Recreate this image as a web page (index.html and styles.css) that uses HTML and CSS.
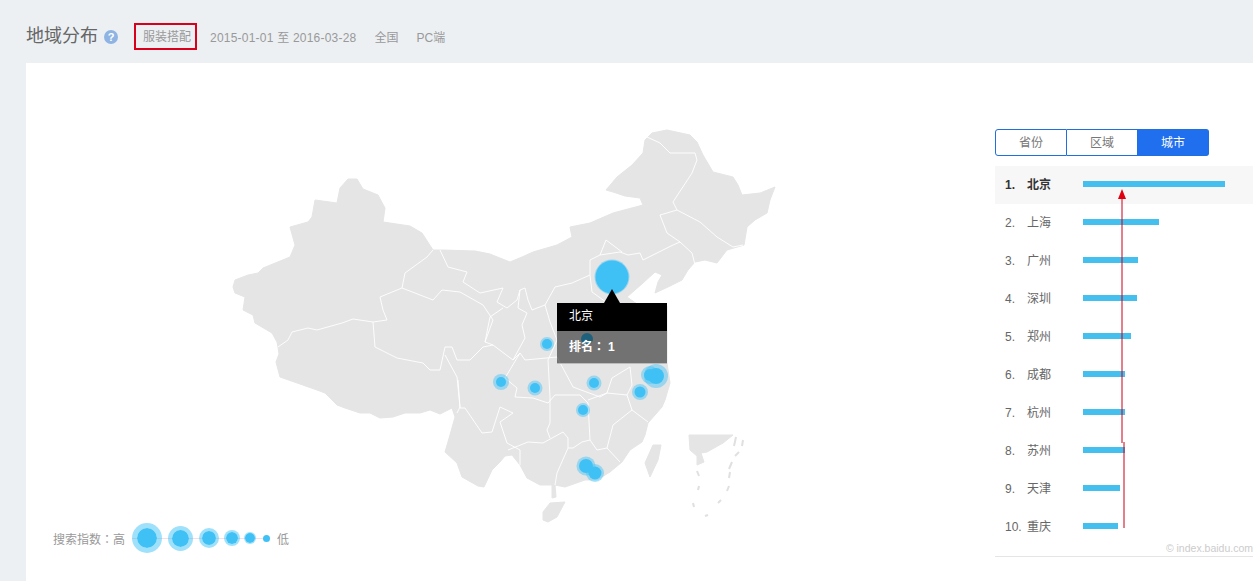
FILE: index.html
```html
<!DOCTYPE html>
<html lang="zh-CN">
<head>
  <meta charset="UTF-8">
  <title>地域分布</title>
  <link rel="stylesheet" href="styles.css">
</head>
<body>

  <div class="cabecera">
    <h1>地域分布</h1>
    <span class="ayuda">?</span>
    <span class="palabra">服装搭配</span>
    <span class="fecha">2015-01-01 至 2016-03-28</span>
    <span class="filtro">全国</span>
    <span class="filtro">PC端</span>
  </div>

  <div class="tarjeta">
    <div class="mapa">
      <svg class="china" width="969" height="400" viewBox="26 123 969 400">
        <g class="tierra">
          <path d="M233 287L235 280 248 275 258 273 263 268 290 257 295 245 290 227 308 222 312 217 315 200 337 203 340 188 348 179 357 179 363 189 378 195 385 208 383 222 410 226 422 233 433 250 442 250 475 251 490 254 510 262 522 257 533 252 557 245 572 237 570 227 590 223 613 213 643 205 640 198 625 196 613 192 606 190 617 177 632 165 643 153 645 140 652 133 667 130 690 135 697 142 703 155 713 172 733 177 738 185 742 195 760 193 775 187 770 200 767 213 755 220 747 227 744 245 727 250 717 263 705 260 695 262 688 270 682 280 668 287 655 293 658 282 662 275 655 272 643 283 627 297 640 306 667 306 667 363 670 383 665 400 662 407 648 423 645 435 642 442 630 450 622 462 610 472 597 480 585 480 565 487 555 485 556 497 552 498 552 485 540 485 527 478 520 465 512 455 505 456 500 462 492 470 484 487 478 486 462 477 457 463 445 452 450 435 455 417 452 408 440 414 430 410 420 413 405 413 393 417 380 418 370 413 360 413 345 408 337 405 325 393 317 390 300 384 280 377 276 362 279 354 278 347 277 342 272 333 255 323 253 315 243 310 245 297 235 293Z"/>
          <path d="M543 512L550 503 565 502 557 517 548 522 543 520Z"/>
          <path d="M653 445L661 445 658 460 650 477 645 463Z"/>
          <path d="M689 435L733 435 723 443 707 452 701 453 704 462 697 465 697 456 690 450Z"/>
        </g>
        <g class="fronteras">
          <path d="M278 347L288 340 292 332 308 328 317 330 342 323 353 319 373 322 387 320 383 310 380 297 402 288 405 273 427 257 433 250"/>
          <path d="M402 288L433 300 442 290 460 292 483 305 493 320 485 342 493 345 513 360 520 353"/>
          <path d="M440 250L448 267 467 272 463 282 480 293 503 288 497 302 507 308 517 300 520 290 525 288 528 300 532 310 545 305 555 287 572 283 590 275 590 260 600 255 620 252 628 255 640 253 643 260 673 245 680 242 692 253 695 265"/>
          <path d="M373 322L375 347 397 358 423 363 430 370 440 370 445 347 452 347 457 360 470 360 483 347 493 345"/>
          <path d="M445 355L457 377 460 407 457 413"/>
          <path d="M647 137L660 143 670 153 695 153 697 160 692 173 673 202 677 210 660 215 667 233 680 242"/>
          <path d="M677 210L700 222 717 237 733 247 743 245"/>
          <path d="M458 380L460 408 465 408 482 433 492 432 500 407 513 413 500 422 507 443 520 450 520 465"/>
          <path d="M508 450L528 442 543 443 563 432 568 438 568 448 557 473 555 485"/>
          <path d="M550 397L550 423 547 430 550 438"/>
          <path d="M517 388L515 397 533 398 548 403 555 395 580 395 588 403 590 440 582 442 573 448 568 448"/>
          <path d="M588 400L607 393 627 395 632 410 648 422"/>
          <path d="M632 410L613 425 607 448 620 462"/>
          <path d="M590 440L597 450 607 448"/>
          <path d="M607 393L612 378 630 367 632 385 627 395"/>
          <path d="M520 353L525 360 557 357 573 387 600 397 607 393"/>
          <path d="M485 342L490 317 503 308"/>
          <path d="M520 290L518 308 527 313 522 325 525 338 513 360"/>
          <path d="M517 388L505 378 520 353"/>
          <path d="M545 305L550 322 557 340 548 360 550 397"/>
          <path d="M590 275L592 292 606 302"/>
          <path d="M600 255L606 240 622 252"/>
        </g>
        <g class="islas">
          <path d="M736 437L734 446"/>
          <path d="M743 440L742 446"/>
          <path d="M739 452L735 456"/>
          <path d="M732 462L729 469"/>
          <path d="M730 472L729 478"/>
          <path d="M729 486L727 491"/>
          <path d="M721 500L718 503"/>
          <path d="M708 515L705 516"/>
          <path d="M693 503L694 507"/>
          <path d="M699 486L698 490"/>
          <path d="M697 471L699 476"/>
        </g>
        <g class="burbujas">
          <circle class="halo" cx="656" cy="376" r="12"/>
          <circle class="halo" cx="650" cy="375" r="9"/>
          <circle class="halo" cx="640" cy="392" r="8"/>
          <circle class="halo" cx="594" cy="383" r="7.5"/>
          <circle class="halo" cx="535" cy="388" r="7.5"/>
          <circle class="halo" cx="501" cy="382" r="8"/>
          <circle class="halo" cx="547" cy="344" r="7"/>
          <circle class="halo" cx="583" cy="410" r="7"/>
          <circle class="halo" cx="586" cy="466" r="9.5"/>
          <circle class="halo" cx="595" cy="473" r="9"/>
          <circle class="halo" cx="612" cy="277" r="17.5"/>
          <circle cx="656" cy="376" r="8"/>
          <circle cx="650" cy="375" r="6"/>
          <circle cx="640" cy="392" r="5.5"/>
          <circle cx="594" cy="383" r="5"/>
          <circle cx="535" cy="388" r="5"/>
          <circle cx="501" cy="382" r="5"/>
          <circle cx="547" cy="344" r="5"/>
          <circle cx="583" cy="410" r="5"/>
          <circle cx="587" cy="339" r="6"/>
          <circle cx="586" cy="466" r="7"/>
          <circle cx="595" cy="473" r="6.5"/>
          <circle cx="612" cy="277" r="16.5"/>
        </g>
      </svg>

      <div class="globo">
        <div class="globo-nombre">北京</div>
        <div class="globo-rango">排名<span class="dos-puntos" lang="zh-TW">：</span>1</div>
      </div>

      <div class="leyenda">
        <span class="leyenda-texto">搜索指数<span class="dos-puntos" lang="zh-TW">：</span>高</span>
        <div class="escala">
          <span class="punto p1"></span>
          <span class="punto p2"></span>
          <span class="punto p3"></span>
          <span class="punto p4"></span>
          <span class="punto p5"></span>
          <span class="punto p6"></span>
        </div>
        <span class="leyenda-texto">低</span>
      </div>
    </div>

    <div class="lateral">
      <div class="pestanas">
        <span class="pestana">省份</span>
        <span class="pestana">区域</span>
        <span class="pestana activa">城市</span>
      </div>

      <div class="lista">
        <div class="fila primera"><span class="num">1.</span><span class="ciudad">北京</span><span class="barra" style="width: 142px"></span></div>
        <div class="fila"><span class="num">2.</span><span class="ciudad">上海</span><span class="barra" style="width: 76px"></span></div>
        <div class="fila"><span class="num">3.</span><span class="ciudad">广州</span><span class="barra" style="width: 55px"></span></div>
        <div class="fila"><span class="num">4.</span><span class="ciudad">深圳</span><span class="barra" style="width: 54px"></span></div>
        <div class="fila"><span class="num">5.</span><span class="ciudad">郑州</span><span class="barra" style="width: 48px"></span></div>
        <div class="fila"><span class="num">6.</span><span class="ciudad">成都</span><span class="barra" style="width: 42px"></span></div>
        <div class="fila"><span class="num">7.</span><span class="ciudad">杭州</span><span class="barra" style="width: 42px"></span></div>
        <div class="fila"><span class="num">8.</span><span class="ciudad">苏州</span><span class="barra" style="width: 42px"></span></div>
        <div class="fila"><span class="num">9.</span><span class="ciudad">天津</span><span class="barra" style="width: 37px"></span></div>
        <div class="fila"><span class="num">10.</span><span class="ciudad">重庆</span><span class="barra" style="width: 35px"></span></div>
      </div>
      <div class="marca">© index.baidu.com</div>
    </div>
  </div>

  <svg class="flecha" width="20" height="345" viewBox="0 0 20 345">
    <path d="M7 9L7 254M9 253L9 339"/>
    <polygon points="7,0 11,10 3,10"/>
  </svg>

</body>
</html>
```

FILE: styles.css
```css
* { box-sizing: border-box; }
html, body {
  margin: 0; padding: 0; height: 100%; overflow: hidden;
  font-family: "Liberation Sans", "Noto Sans CJK SC", sans-serif;
  background-color: #ecf0f3; color: #666;
}
body { position: relative; }

.cabecera {
  display: flex; align-items: center; height: 63px;
  padding: 14px 0 4px 26px; font-size: 12px; color: #999;
}
.cabecera h1 { margin: 0 0 5px; font-size: 18px; font-weight: normal; color: #666; }
.ayuda {
  display: block; width: 14px; height: 14px; margin-left: 6px; border-radius: 50%;
  background-color: #8fb4e3; color: white;
  font-size: 11px; font-weight: bold; line-height: 14px; text-align: center;
}
.palabra {
  height: 27px; margin-left: 16px; padding: 0 4px 0 7px;
  border: 2px solid #d9001b; line-height: 24px;
}
.fecha { margin-left: 13px; letter-spacing: 0.22px; }
.filtro { margin-left: 18px; }

.tarjeta {
  display: flex; height: 518px; margin-left: 26px; background: white;
}
.mapa { position: relative; width: 969px; padding-top: 60px; }
.china { display: block; }
.tierra { fill: #e5e5e5; stroke: #e5e5e5; stroke-width: 1; stroke-linejoin: round; }
.fronteras { fill: none; stroke: #fff; stroke-width: 0.9; stroke-linejoin: round; }
.islas { fill: none; stroke: #e0e0e0; stroke-width: 2; }
.burbujas circle { fill: #3fc1f6; }
.burbujas .halo { fill: rgba(63, 193, 246, 0.45); }

.globo {
  position: absolute; left: 531px; top: 240px; width: 110px;
  font-size: 12px; color: white;
}
.globo::before {
  content: ""; position: absolute; left: 47px; top: -14px;
  border-left: 8px solid transparent; border-right: 8px solid transparent;
  border-bottom: 14px solid black;
}
.globo-nombre { height: 28px; padding-left: 12px; background: black; line-height: 27px; }
.globo-rango {
  height: 33px; padding-left: 12px; background: rgba(0, 0, 0, 0.5);
  border-bottom: 1px solid #bbb; font-weight: bold; line-height: 30px;
}
.dos-puntos { font-family: "Noto Sans CJK TC", sans-serif; }
.globo-rango .dos-puntos { padding-right: 3px; }

.leyenda {
  display: flex; align-items: center; height: 30px; padding-left: 27px;
  font-size: 12px; color: #999;
}
.escala {
  display: flex; align-items: center; margin: 0 7px 0 7px;
  background: linear-gradient(#f3dfe6, #f3dfe6) center / 100% 1px no-repeat;
}
.punto {
  display: block; border-radius: 50%; background-color: #3fc1f6;
  background-clip: padding-box; border-style: solid; border-color: rgba(63, 193, 246, 0.5);
}
.p1 { width: 30px; height: 30px; border-width: 5px; }
.p2 { width: 25px; height: 25px; border-width: 4px; margin-left: 6px; }
.p3 { width: 20px; height: 20px; border-width: 3px; margin-left: 6px; }
.p4 { width: 16px; height: 16px; border-width: 2px; margin-left: 5px; }
.p5 { width: 12px; height: 12px; border-width: 1px; margin-left: 4px; }
.p6 { width: 7px; height: 7px; border-width: 0; margin-left: 7px; }

.lateral { position: relative; flex: 1; padding-top: 66px; }
.pestanas { display: flex; width: 214px; height: 27px; font-size: 12px; }
.pestana {
  flex: 1; border: 1px solid #1f6fde; border-left: none;
  line-height: 26px; text-align: center; color: #777;
}
.pestana:first-child { border-left: 1px solid #1f6fde; border-radius: 3px 0 0 3px; }
.pestana.activa { background-color: #1f6fee; color: white; border-radius: 0 3px 3px 0; }

.lista { margin-top: 10px; padding-bottom: 10px; border-bottom: 1px solid #e5e5e5; }
.fila {
  display: flex; align-items: baseline; height: 38px; padding-left: 10px;
  font-size: 12px; line-height: 38px; color: #666;
}
.fila.primera { background-color: #f7f7f7; color: #333; font-weight: bold; }
.num { width: 22px; white-space: nowrap; }
.ciudad { width: 56px; }
.barra { display: block; align-self: center; height: 6px; margin-top: -2px; background-color: #45c0ee; }

.marca {
  position: absolute; right: 0; top: 479px;
  font-size: 10.5px; color: #ccc; white-space: nowrap;
}

.flecha { position: absolute; left: 1115px; top: 189px; }
.flecha path { fill: none; stroke: #c8001a; stroke-width: 1; }
.flecha polygon { fill: #e0000f; }
```
